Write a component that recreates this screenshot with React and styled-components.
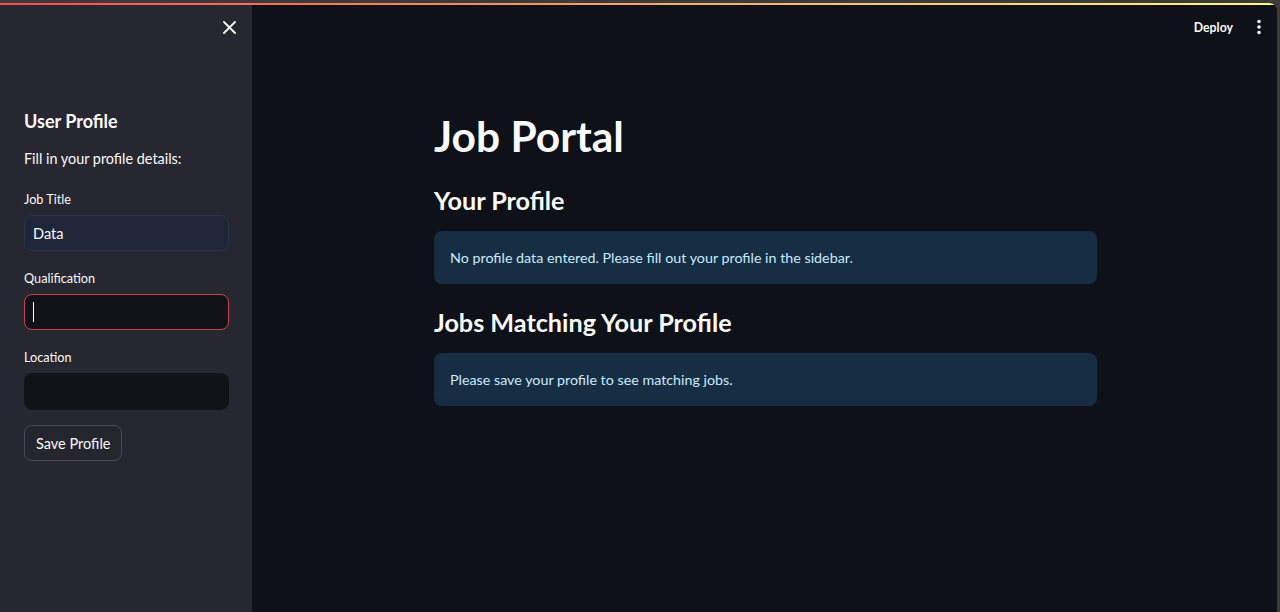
import React from "react";
import styled, { createGlobalStyle } from "styled-components";

const GlobalStyle = createGlobalStyle`
  html, body {
    margin: 0;
    padding: 0;
    height: 100%;
    background: #3b3b3d;
  }
  #root {
    height: 100%;
  }
  * { box-sizing: border-box; }
`;

const Frame = styled.div`
  height: 100%;
  padding: 3px 3px 0 0;
`;

const AppShell = styled.div`
  height: 100%;
  display: flex;
  flex-direction: column;
  border-top-right-radius: 8px;
  overflow: hidden;
  background: #0e1117;
  font-family: Lato, "Open Sans", sans-serif;
  color: #fafafa;
`;

const Decoration = styled.div`
  height: 2px;
  flex: none;
  background: linear-gradient(90deg, #ff4b4b, #fffd80);
`;

const Body = styled.div`
  flex: 1;
  display: flex;
  min-height: 0;
`;

const Sidebar = styled.aside`
  width: 252px;
  flex: none;
  background: #262730;
  display: flex;
  flex-direction: column;
`;

const SidebarHeader = styled.div`
  height: 44px;
  display: flex;
  align-items: center;
  justify-content: flex-end;
  padding-right: 15px;
`;

const IconButton = styled.button`
  background: none;
  border: none;
  padding: 0;
  display: flex;
  align-items: center;
  justify-content: center;
  width: 16px;
  height: 16px;
  color: #fafafa;
  cursor: pointer;
`;

const SidebarContent = styled.div`
  padding: 60px 23px 0 24px;
  display: flex;
  flex-direction: column;
`;

const SideHeading = styled.h2`
  margin: 0;
  font-size: 18px;
  line-height: 24px;
  font-weight: 700;
  color: #fafafa;
`;

const SideText = styled.p`
  margin: 15px 0 0 0;
  font-size: 14.4px;
  line-height: 22px;
  color: #fafafa;
`;

const FieldGroup = styled.div`
  margin-top: ${(p) => p.$top}px;
  display: flex;
  flex-direction: column;
  gap: 7px;
`;

const Label = styled.label`
  font-size: 12.7px;
  line-height: 18px;
  color: #fafafa;
`;

const Field = styled.div`
  height: ${(p) => p.$h || 36}px;
  border-radius: 8px;
  display: flex;
  align-items: center;
  padding: 0 8px;
  background: ${(p) => (p.$variant === "filled" ? "#1f2638" : "#111319")};
  border: 1px solid
    ${(p) =>
      p.$variant === "filled"
        ? "#2c3345"
        : p.$variant === "focus"
        ? "#c3444f"
        : "#111319"};
`;

const Caret = styled.span`
  width: 1px;
  height: 20px;
  background: #fafafa;
  flex: none;
`;

const Input = styled.input`
  flex: 1;
  min-width: 0;
  background: transparent;
  border: none;
  outline: none;
  padding: 0;
  font-family: inherit;
  font-size: 14.6px;
  color: #fafafa;
`;

const Button = styled.button`
  margin-top: 15px;
  align-self: flex-start;
  height: 36px;
  padding: 0 11px;
  border-radius: 8px;
  border: 1px solid #4a4b54;
  background: #24252d;
  color: #fafafa;
  font-family: inherit;
  font-size: 14.5px;
`;

const Main = styled.main`
  flex: 1;
  display: flex;
  flex-direction: column;
  min-width: 0;
  padding-left: 2px;
`;

const MainHeader = styled.header`
  height: 44px;
  display: flex;
  align-items: center;
  justify-content: flex-end;
  gap: 23px;
  padding-right: 15px;
`;

const DeployButton = styled.button`
  background: none;
  border: none;
  padding: 0;
  color: #fafafa;
  font-family: inherit;
  font-size: 12.3px;
  font-weight: 700;
`;

const Content = styled.div`
  width: 663px;
  margin: 0 auto;
  padding-top: 63px;
  display: flex;
  flex-direction: column;
`;

const Title = styled.h1`
  margin: 0;
  font-size: 42.5px;
  line-height: 48px;
  font-weight: 700;
  color: #fafafa;
`;

const SectionTitle = styled.h2`
  margin: ${(p) => p.$top}px 0 0 0;
  font-size: 25.2px;
  line-height: 34px;
  font-weight: 700;
  color: #fafafa;
`;

const Alert = styled.div`
  margin-top: 14px;
  height: 53px;
  border-radius: 8px;
  background: #172d43;
  color: #c7ebff;
  display: flex;
  align-items: center;
  padding: 0 16px;
  font-size: 14.3px;
`;

const CloseIcon = () => (
  <svg width="13" height="13" viewBox="0 0 13 13" fill="none">
    <path d="M1 1 L12 12 M12 1 L1 12" stroke="currentColor" strokeWidth="1.8" strokeLinecap="round" />
  </svg>
);

const KebabIcon = () => (
  <svg width="6" height="16" viewBox="0 0 6 16" fill="#fafafa">
    <circle cx="3" cy="2.5" r="1.8" />
    <circle cx="3" cy="8" r="1.8" />
    <circle cx="3" cy="13.5" r="1.8" />
  </svg>
);

export default function App() {
  return (
    <>
      <GlobalStyle />
      <Frame>
        <AppShell>
          <Decoration />
          <Body>
            <Sidebar>
              <SidebarHeader>
                <IconButton aria-label="Close sidebar">
                  <CloseIcon />
                </IconButton>
              </SidebarHeader>
              <SidebarContent>
                <SideHeading>User Profile</SideHeading>
                <SideText>Fill in your profile details:</SideText>
                <FieldGroup $top={20}>
                  <Label>Job Title</Label>
                  <Field $variant="filled">
                    <Input defaultValue="Data" readOnly />
                  </Field>
                </FieldGroup>
                <FieldGroup $top={18}>
                  <Label>Qualification</Label>
                  <Field $variant="focus">
                    <Caret />
                    <Input readOnly />
                  </Field>
                </FieldGroup>
                <FieldGroup $top={18}>
                  <Label>Location</Label>
                  <Field $variant="empty" $h={37}>
                    <Input readOnly />
                  </Field>
                </FieldGroup>
                <Button>Save Profile</Button>
              </SidebarContent>
            </Sidebar>
            <Main>
              <MainHeader>
                <DeployButton>Deploy</DeployButton>
                <KebabIcon />
              </MainHeader>
              <Content>
                <Title>Job Portal</Title>
                <SectionTitle $top={23}>Your Profile</SectionTitle>
                <Alert>No profile data entered. Please fill out your profile in the sidebar.</Alert>
                <SectionTitle $top={21}>Jobs Matching Your Profile</SectionTitle>
                <Alert>Please save your profile to see matching jobs.</Alert>
              </Content>
            </Main>
          </Body>
        </AppShell>
      </Frame>
    </>
  );
}
